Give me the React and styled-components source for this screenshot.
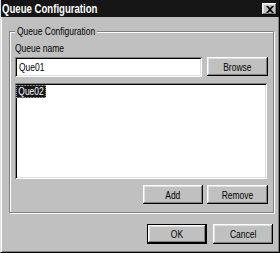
import React from 'react';
import styled, { createGlobalStyle } from 'styled-components';

const GlobalStyle = createGlobalStyle`
    html, body {
        margin: 0;
        padding: 0;
        background: #c0c0c0;
    }
    * {
        box-sizing: border-box;
    }
`;

const font = `"Liberation Sans", Arial, sans-serif`;

// the dialog's bitmap font is narrow and tall, so squeeze Liberation Sans sideways
const Txt = styled.span`
    display: inline-block;
    white-space: nowrap;
    transform: scaleX(${p => p.$sx || 0.77});
    transform-origin: ${p => (p.$center ? 'center' : 'left')} center;
`;

const Window = styled.div`
    width: 280px;
    height: 253px;
    display: flex;
    flex-direction: column;
    background: #c0c0c0;
    font-family: ${font};
    font-size: 11px;
    color: #000;
    border-left: 1px solid #dfdfdf;
    border-right: 1px solid #000;
    border-bottom: 1px solid #000;
    box-shadow: inset 1px 0 0 #fff, inset -1px -1px 0 #808080;
    overflow: hidden;
`;

const TitleBar = styled.div`
    height: 17px;
    margin-left: -1px;
    margin-right: -1px;
    background: #161616;
    display: flex;
    align-items: center;
    justify-content: space-between;
    padding: 0 3px 0 2px;
`;

const Title = styled(Txt)`
    color: #fff;
    font-weight: bold;
    font-size: 12px;
`;

const CloseButton = styled.div`
    width: 15px;
    height: 12px;
    margin-top: 1px;
    background: #c0c0c0;
    display: flex;
    align-items: center;
    justify-content: center;
    box-shadow: inset -1px -1px #000, inset 1px 1px #fff, inset -2px -2px #808080, inset 2px 2px #dfdfdf;
`;

const Body = styled.div`
    flex: 1;
    display: flex;
    flex-direction: column;
    padding: 14px 5px 0 8px;
`;

const GroupBox = styled.div`
    position: relative;
    border: 1px solid #808080;
    box-shadow: inset 1px 1px 0 #fff, 1px 1px 0 #fff;
    padding: 10px 5px 8px 5px;
    display: flex;
    flex-direction: column;
`;

const Legend = styled.span`
    position: absolute;
    top: -7px;
    left: 5px;
    width: 82px;
    padding: 0 0 0 2px;
    background: #c0c0c0;
    line-height: 13px;
`;

const Label = styled.div`
    line-height: 13px;
    margin-bottom: 2px;
`;

const Row = styled.div`
    display: flex;
    align-items: flex-start;
    gap: ${p => p.$gap || 5}px;
    justify-content: ${p => (p.$end ? 'flex-end' : 'flex-start')};
    margin-top: ${p => p.$top || 0}px;
`;

const TextField = styled.div`
    flex: 1;
    height: 20px;
    background: #fff;
    display: flex;
    align-items: center;
    padding-left: 4px;
    box-shadow: inset 1px 1px #808080, inset -1px -1px #fff, inset 2px 2px #000, inset -2px -2px #dfdfdf;
`;

const Button = styled.div`
    width: ${p => p.$w}px;
    height: ${p => p.$h || 19}px;
    display: flex;
    align-items: center;
    justify-content: center;
    background: #c0c0c0;
    border: ${p => (p.$default ? '1px solid #000' : 'none')};
    box-shadow: inset -1px -1px #000, inset 1px 1px #fff, inset -2px -2px #808080, inset 2px 2px #dfdfdf;
`;

const ListBox = styled.div`
    height: 96px;
    margin-top: 6px;
    margin-right: 1px;
    background: #fff;
    padding: 2px 2px 2px 1px;
    box-shadow: inset 1px 1px #808080, inset -1px -1px #fff, inset 2px 2px #000, inset -2px -2px #dfdfdf;
`;

const ListItem = styled.div`
    display: inline-block;
    line-height: 11px;
    padding: 0 2px;
    transform: scaleX(0.77);
    transform-origin: left center;
    color: ${p => (p.$selected ? '#fff' : '#000')};
    background: ${p => (p.$selected ? '#161616' : 'transparent')};
    border: 1px dotted ${p => (p.$selected ? '#c0c0c0' : 'transparent')};
`;

const Footer = styled.div`
    display: flex;
    justify-content: flex-end;
    gap: 6px;
    padding: 11px 1px 0 0;
`;

export default function App() {
    return (
        <>
            <GlobalStyle />
            <Window>
                <TitleBar>
                    <Title $sx={0.8}>Queue Configuration</Title>
                    <CloseButton>
                        <svg width="8" height="7" viewBox="0 0 8 7">
                            <path d="M0 0h2l2 2 2-2h2L5 3.5 8 7H6L4 5 2 7H0l3-3.5z" fill="#000" />
                        </svg>
                    </CloseButton>
                </TitleBar>
                <Body>
                    <GroupBox>
                        <Legend><Txt>Queue Configuration</Txt></Legend>
                        <Label><Txt>Queue name</Txt></Label>
                        <Row>
                            <TextField><Txt>Que01</Txt></TextField>
                            <Button $w={61}><Txt $center>Browse</Txt></Button>
                        </Row>
                        <ListBox>
                            <ListItem $selected>Que02</ListItem>
                        </ListBox>
                        <Row $end $gap={4} $top={6}>
                            <Button $w={60}><Txt $center>Add</Txt></Button>
                            <Button $w={61}><Txt $center>Remove</Txt></Button>
                        </Row>
                    </GroupBox>
                    <Footer>
                        <Button $w={60} $h={20} $default><Txt $center>OK</Txt></Button>
                        <Button $w={60} $h={20}><Txt $center>Cancel</Txt></Button>
                    </Footer>
                </Body>
            </Window>
        </>
    );
}
